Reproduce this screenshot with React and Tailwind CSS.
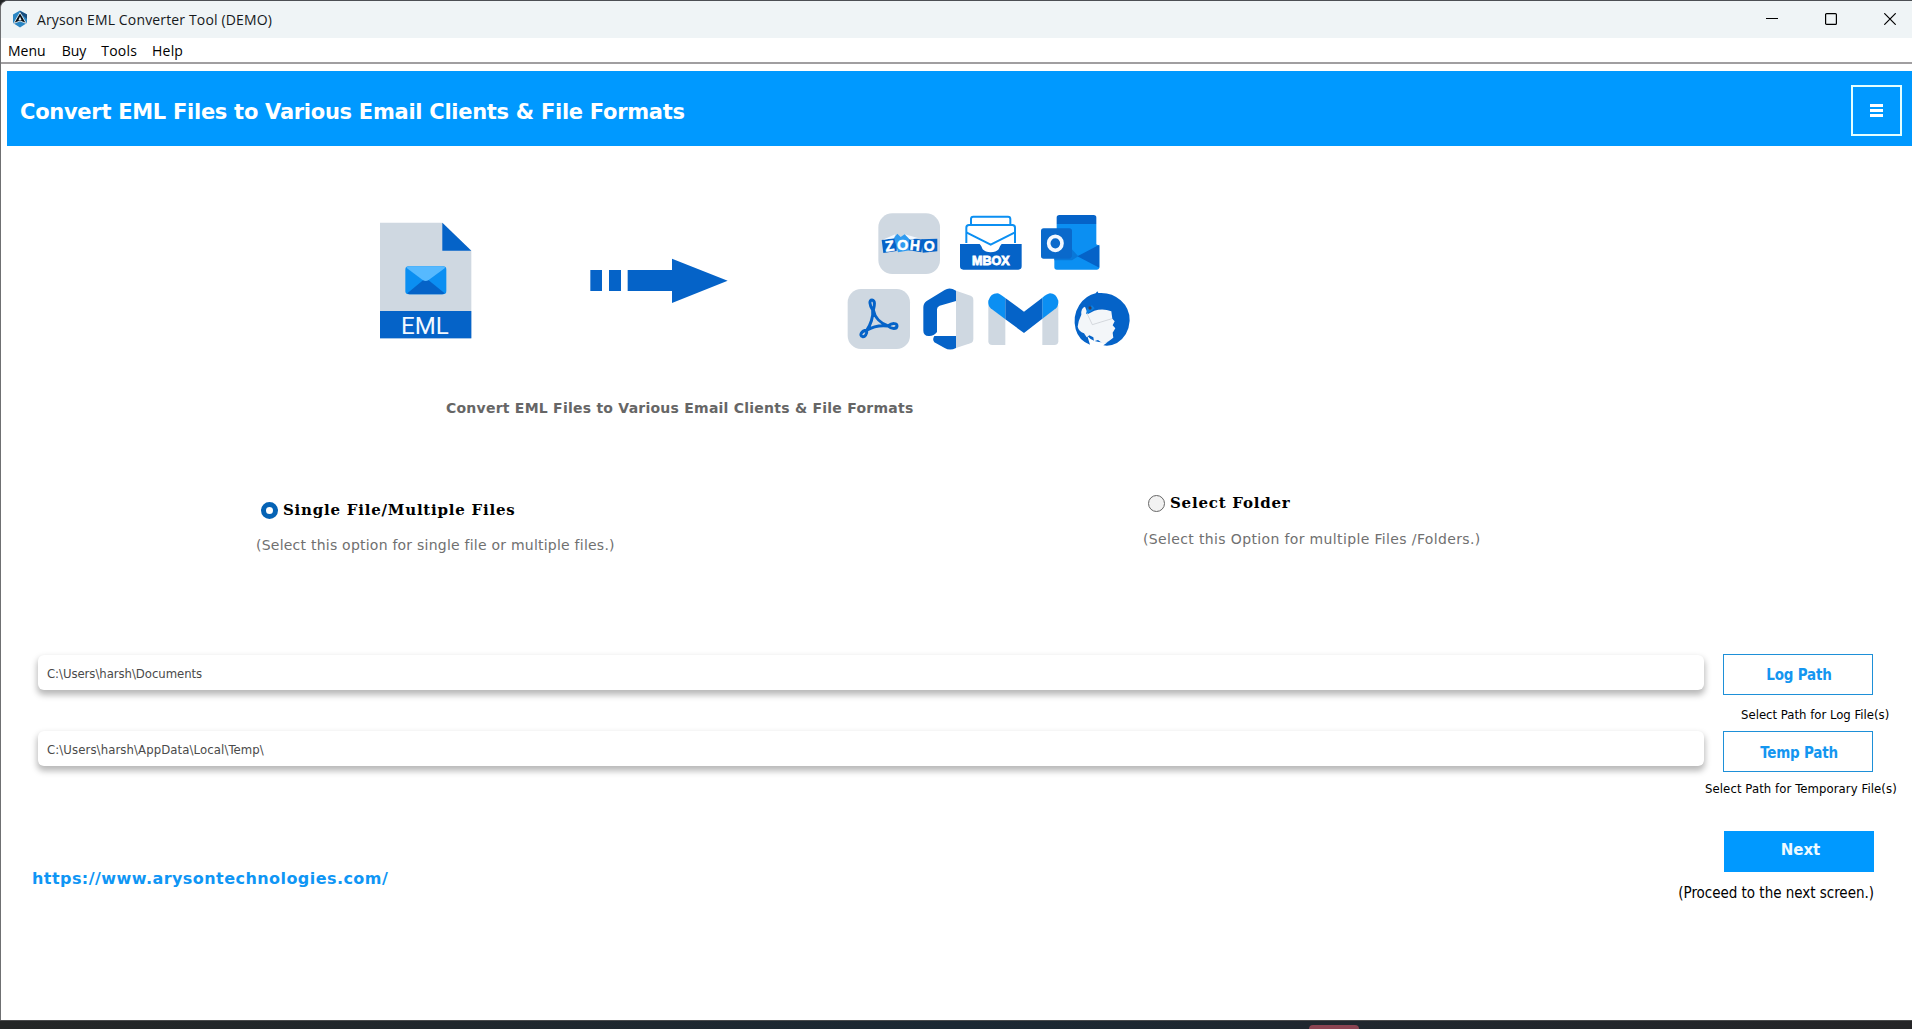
import React, { useState } from 'react';

const AppLogo = () => (
  <svg className="h-[18px] w-4" viewBox="0 0 16 18">
    <path d="M8 0.5 L15 4.5 V13 L8 17.5 L1 13 V4.5 Z" fill="#2a86c4" />
    <path d="M8 1 L15 4.5 V9 L8 3 Z" fill="#1b4e7d" />
    <path d="M8 2.6 L14.3 13.4 L8 11 L1.7 13.4 Z" fill="#0b0f14" stroke="#e6f3fa" strokeWidth="0.9" />
    <path d="M8 6.6 L9.6 10.2 H6.4 Z" fill="#e6f3fa" />
  </svg>
);

const EmlFile = () => (
  <svg className="h-[117px] w-[92px]" viewBox="60 66 276 351">
    <path d="M60 68 H247 L334 152 V415 H60 Z" fill="#cfd8e1" />
    <path d="M247 68 L334 152 H247 Z" fill="#0563c8" />
    <rect x="136" y="199" width="123" height="84" rx="10" fill="#0b8ff2" />
    <path d="M142 280 L190 240 H205 L254 280 Q250 283 246 283 H149 Q145 283 142 280 Z" fill="#0563c8" />
    <path d="M139 203 Q142 199 149 199 H246 Q253 199 256 203 L206 240 Q197 246 188 240 Z" fill="#56b9ff" />
    <rect x="60" y="333" width="274" height="82" fill="#0563c8" />
    <text
      x="123"
      y="401"
      textLength="143"
      lengthAdjust="spacingAndGlyphs"
      fill="#f2f8ff"
      className="font-['Roboto',sans-serif] text-[74px]"
    >
      EML
    </text>
  </svg>
);

const Arrow = () => (
  <svg className="h-[46px] w-[139px]" viewBox="690 175 417 138" fill="#0563c8">
    <rect x="691" y="211" width="35" height="63" />
    <rect x="747" y="211" width="36" height="63" />
    <path d="M803 211 H936 V177 L1103 243 L936 310 V274 H803 Z" />
  </svg>
);

const ClientLogos = () => (
  <svg className="h-[150px] w-[300px]" viewBox="0 0 900 450">
    {/* top row */}
    <g transform="translate(90 0)">
      <rect x="25" y="25" width="185" height="182" rx="42" fill="#cfd8e1" />
      <path d="M35 105 L82 98 L80 138 L40 144 Z" fill="#0563c8" />
      <path d="M72 98 L82 86 L92 96 L104 88 L122 98 L120 136 L84 142 Z" fill="#2f9bf0" />
      <path d="M118 98 L160 104 L154 142 L116 136 Z" fill="#0563c8" />
      <path d="M154 103 L202 101 L202 139 L158 143 Z" fill="#0563c8" />
      <path d="M52 98 L76 88 L72 100 L38 104 Z M104 88 L144 99 L120 104 Z" fill="#f4f9ff" />
      <g
        fill="#fff"
        stroke="#fff"
        strokeWidth="1.5"
        className="font-['Liberation_Sans',sans-serif] text-[44px] font-bold"
      >
        <text x="45" y="138" transform="rotate(-7 58 122)">Z</text>
        <text x="81" y="135" textLength="34" lengthAdjust="spacingAndGlyphs">O</text>
        <text x="120" y="136" textLength="30" lengthAdjust="spacingAndGlyphs" transform="rotate(6 136 120)">H</text>
        <text x="161" y="138" textLength="33" lengthAdjust="spacingAndGlyphs">O</text>
      </g>

      <g fill="none" stroke="#0b8ff2" strokeWidth="6">
        <path d="M303 60 V42 Q303 35 310 35 H414 Q421 35 421 42 V60" />
        <path d="M289 114 V68 Q289 60 297 60 H427 Q435 60 435 68 V114" />
        <path d="M289 82 L362 119 L435 82" />
      </g>
      <path d="M270 117 H329 Q336 124 338 133 Q346 142 362 142 Q378 142 386 133 Q388 124 395 117 H455 V184 Q455 194 445 194 H280 Q270 194 270 184 Z" fill="#0563c8" />
      <text
        x="306"
        y="180"
        textLength="113"
        lengthAdjust="spacingAndGlyphs"
        fill="#fff"
        stroke="#fff"
        strokeWidth="2.5"
        className="font-['Liberation_Sans',sans-serif] text-[37px] font-bold"
      >
        MBOX
      </text>

      <path d="M560 38 Q560 30 568 30 H671 Q679 30 679 38 V57 H560 Z" fill="#0563c8" />
      <path d="M560 57 H679 V118 L688 122 V187 Q688 194 680 194 H561 Q553 194 553 187 V120 L560 115 Z" fill="#0b8ff2" />
      <path d="M688 119 V188 L622 154 Z" fill="#0563c8" />
      <path d="M553 160 H605 V132 L625 154 L606 166 H553 Z" fill="#0877d8" />
      <rect x="513" y="70" width="93" height="91" rx="8" fill="#0a69cb" />
      <ellipse cx="556" cy="115" rx="20" ry="21" fill="none" stroke="#f3f8ff" strokeWidth="11" />
    </g>

    {/* bottom row */}
    <g transform="translate(0 225)">
      <rect x="23" y="27" width="187" height="180" rx="40" fill="#cfd8e1" />
      <path
        d="M80 151 C91 137 101 109 98 90 C88 74 87 60 96 60 C106 61 104 76 100 90 C104 112 122 130 144 138 C158 127 171 130 171 138 C170 148 155 148 144 138 C120 135 98 140 80 151 C82 163 74 171 68 170 C57 167 64 152 80 151 Z"
        fill="none"
        stroke="#0563c8"
        strokeWidth="9"
        strokeLinejoin="round"
      />

      <path d="M250 82 Q250 70 260 63 L314 30 Q329 20 348 32 V63 L299 77 Q291 80 291 88 V156 Q281 169 266 168 Q250 167 250 152 Z" fill="#0563c8" />
      <path d="M283 168 H348 V204 Q330 213 314 204 L283 187 Q276 178 283 168 Z" fill="#0563c8" />
      <path d="M348 32 L392 47 Q400 50 400 60 V176 Q400 187 391 190 L348 204 Z" fill="#cfd8e1" />

      <path d="M445 75 L496 116 V195 H457 Q445 195 445 184 Z" fill="#cfd8e1" />
      <path d="M655 75 L607 114 V195 H643 Q655 195 655 184 Z" fill="#cfd8e1" />
      <path d="M496 54 V118 L452 85 Q443 76 445 62 Q452 40 472 40 Q478 40 496 54 Z" fill="#0b8ff2" />
      <path d="M607 53 V116 L648 85 Q656 77 655 62 Q648 40 630 40 Q622 41 607 53 Z" fill="#0b8ff2" />
      <path d="M496 54 L552 95 L607 53 V116 L552 159 L496 118 Z" fill="#0563c8" />

      <path d="M767 40 L772 34 L775 39 Q815 36 842 61 Q870 86 869 122 Q866 166 831 189 Q810 200 790 196 L803 187 Q760 190 742 168 L750 194 Q716 182 707 148 Q697 108 718 75 Q738 46 767 40 Z" fill="#0563c8" />
      <path d="M735 80 Q722 84 724 104 Q714 124 713 140 Q716 154 732 160 L740 172 L748 166 L760 172 L762 184 L774 180 L790 192 L806 184 L820 173 L818 158 L826 145 L818 136 L824 124 L817 116 L814 94 Q790 84 763 92 L744 102 Z" fill="#f3f6f9" />
      <path d="M739 96 L757 134 L816 116" fill="none" stroke="#c4c9ce" strokeWidth="2" />
      <path d="M738 103 L742 84 L756 76 L764 85 L755 93 Z" fill="#0b7ee0" />
      <circle cx="750" cy="84" r="5" fill="#3d3f55" />
    </g>
  </svg>
);

const options = [
  {
    id: 'files',
    label: 'Single File/Multiple Files',
    hint: '(Select this option for single file or multiple files.)',
    column: 'w-[887px] pt-[7px]',
    hintStyle: 'mt-[14px] tracking-[0.23px]'
  },
  {
    id: 'folder',
    label: 'Select Folder',
    hint: '(Select this Option for multiple Files /Folders.)',
    column: '',
    hintStyle: 'mt-[15px] tracking-[0.36px]'
  }
];

const App = () => {
  const [selected, setSelected] = useState('files');

  return (
    <div className="flex h-[1029px] w-[1912px] flex-col overflow-hidden bg-[#222526] font-['DejaVu_Sans',Verdana,sans-serif]">
      <div className="flex h-[1020px] flex-col overflow-hidden rounded-tl-lg border-l border-t border-l-[#6f7072] border-t-[#4c4f54] bg-white">
        <div className="flex h-[37px] shrink-0 items-center justify-between bg-[#eff4f6] pl-[11px] pr-4">
          <div className="flex items-center gap-[9px] pb-px">
            <AppLogo />
            <span className="pt-px font-['Open_Sans','Noto_Sans',sans-serif] text-sm tracking-[0.15px] text-[#16191c]">
              Aryson EML Converter Tool (DEMO)
            </span>
          </div>
          <div className="flex items-center gap-[47px] pb-px text-black">
            <svg className="h-3 w-3" viewBox="0 0 12 12"><path d="M0 5.5 H12" stroke="currentColor" /></svg>
            <svg className="h-3 w-3" viewBox="0 0 12 12"><rect x="0.6" y="0.6" width="10.8" height="10.8" rx="1" fill="none" stroke="currentColor" strokeWidth="1.2" /></svg>
            <svg className="h-3 w-3" viewBox="0 0 12 12"><path d="M0.3 0.3 L11.7 11.7 M11.7 0.3 L0.3 11.7" stroke="currentColor" strokeWidth="1.2" /></svg>
          </div>
        </div>

        <div className="flex h-[26px] shrink-0 items-center gap-4 border-b-2 border-[#a09ea0] pt-0.5 pl-[7px] font-['Open_Sans','Noto_Sans',sans-serif] text-sm text-black">
          <span>Menu</span>
          <span>Buy</span>
          <span className="-ml-px tracking-[0.2px]">Tools</span>
          <span className="-ml-px tracking-[0.2px]">Help</span>
        </div>

        <div className="ml-1.5 mt-[7px] flex h-[75px] shrink-0 items-center justify-between bg-[#0099ff] pl-[13px] pr-2.5">
          <h1 className="pt-[7px] text-[21px] leading-7 font-bold tracking-[-0.28px] text-white">
            Convert EML Files to Various Email Clients &amp; File Formats
          </h1>
          <button className="mt-1 flex h-[51px] w-[51px] flex-col items-center justify-center gap-0.5 border-2 border-[#e4ffff]">
            <span className="h-[3px] w-[13px] bg-white" />
            <span className="h-[3px] w-[13px] bg-white" />
            <span className="h-[3px] w-[13px] bg-white" />
          </button>
        </div>

        <div className="flex h-[209px] shrink-0 items-start pl-[379px] pt-[59px]">
          <div className="pt-[17px]"><EmlFile /></div>
          <div className="ml-[118px] pt-[53px]"><Arrow /></div>
          <div className="ml-[111px]"><ClientLogos /></div>
        </div>

        <h2 className="mt-[43px] pl-[445px] text-sm font-bold tracking-[0.24px] text-[#666666]">
          Convert EML Files to Various Email Clients &amp; File Formats
        </h2>

        <div className="mt-[75px] flex h-[161px] shrink-0 items-start pl-[255px]">
          {options.map(option => (
            <div key={option.id} className={option.column}>
              <label className="flex items-center gap-[5px] pl-[5px] text-[15px] leading-5 font-bold text-black">
                <input
                  type="radio"
                  name="source"
                  className="h-[17px] w-[17px] appearance-none rounded-full border border-[#666666] bg-[#f2f2f2] checked:border-5 checked:border-[#0563b5] checked:bg-white"
                  checked={selected === option.id}
                  onChange={() => setSelected(option.id)}
                />
                <span className="font-['DejaVu_Serif',serif] tracking-[0.78px]">{option.label}</span>
              </label>
              <p className={`${option.hintStyle} pt-px text-sm text-[#707070]`}>{option.hint}</p>
            </div>
          ))}
        </div>

        <div className="flex shrink-0 justify-between pl-[37px] font-['DejaVu_Sans_Condensed','DejaVu_Sans',sans-serif]">
          <div className="flex w-[1666px] flex-col gap-[41px] pt-px text-[13px] text-[#4a4a4a]">
            <div className="flex h-[35px] items-center rounded-md bg-white pt-0.5 pl-[9px] tracking-[-0.05px] shadow-[0_4px_6px_1px_rgba(0,0,0,0.28)]">
              C:\Users\harsh\Documents
            </div>
            <div className="flex h-[35px] items-center rounded-md bg-white pt-0.5 pl-[9px] tracking-[0.1px] shadow-[0_4px_6px_1px_rgba(0,0,0,0.28)]">
              C:\Users\harsh\AppData\Local\Temp\
            </div>
          </div>
          <div className="flex w-[208px] flex-col">
            <button className="ml-[19px] h-[41px] w-[150px] border border-[#1e90d8] pt-px pl-0.5 text-[15px] font-bold tracking-[-0.2px] text-[#1496f0]">
              Log Path
            </button>
            <p className="ml-[37px] mt-[10px] text-[13px] leading-5 whitespace-nowrap text-black">
              Select Path for Log File(s)
            </p>
            <button className="ml-[19px] mt-[6px] h-[41px] w-[150px] border border-[#1e90d8] pt-[3px] pl-0.5 text-[15px] font-bold tracking-[-0.2px] text-[#1496f0]">
              Temp Path
            </button>
            <p className="ml-px mt-[7px] text-[13px] leading-5 tracking-[0.08px] whitespace-nowrap text-black">
              Select Path for Temporary File(s)
            </p>
          </div>
        </div>

        <div className="mt-8 flex shrink-0 items-start justify-between pl-[31px] pr-[38px]">
          <a className="pt-[38px] text-base leading-5 font-bold tracking-[0.44px] text-[#0f96f5]">
            https://www.arysontechnologies.com/
          </a>
          <div className="flex flex-col items-end">
            <button className="h-[41px] w-[150px] bg-[#0099ff] pb-0.5 pl-[3px] text-[15px] font-bold text-[#eefaff]">Next</button>
            <p className="mt-[11px] font-['DejaVu_Sans_Condensed','DejaVu_Sans',sans-serif] text-[15px] leading-5 tracking-[-0.02px] text-black">
              (Proceed to the next screen.)
            </p>
          </div>
        </div>
      </div>

      {/* strip of the desktop taskbar */}
      <div className="flex h-[9px] items-end border-t border-[#4a4b4c] bg-linear-to-r from-[#242626] via-[#1b2833] to-[#252527] pl-[1309px]">
        <span className="h-1 w-[50px] rounded-t bg-[#8b4452]" />
      </div>
    </div>
  );
};

export default App;
